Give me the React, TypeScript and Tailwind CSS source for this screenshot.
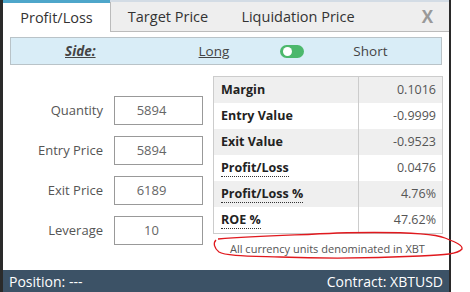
import React from 'react';

const inputs = [
  { label: 'Quantity', value: '5894' },
  { label: 'Entry Price', value: '5894' },
  { label: 'Exit Price', value: '6189' },
  { label: 'Leverage', value: '10' },
];

const results = [
  { label: 'Margin', value: '0.1016', dotted: false },
  { label: 'Entry Value', value: '-0.9999', dotted: false },
  { label: 'Exit Value', value: '-0.9523', dotted: false },
  { label: 'Profit/Loss', value: '0.0476', dotted: true },
  { label: 'Profit/Loss %', value: '4.76%', dotted: true },
  { label: 'ROE %', value: '47.62%', dotted: true },
];

export default function App() {
  return (
    <div className="relative w-[470px] h-[292px] bg-white font-['Open_Sans',sans-serif] overflow-hidden">
      <div className="w-[451px] h-[292px] flex flex-col border-l-[3px] border-r-2 border-[#2a2a2a]">
        {/* Tabs */}
        <div className="flex h-[32px] bg-[#eeeeee] border-t-2 border-[#d3dce5] text-[14.5px] text-[#333]">
          <div className="w-[107px] -mt-[2px] border-t-[3px] border-[#4ea6ca] bg-white flex items-center justify-center">
            Profit/Loss
          </div>
          <div className="w-[115px] border-l border-b border-[#bbbbbb] flex items-center justify-center">
            Target Price
          </div>
          <div className="w-[146px] border-b border-[#bbbbbb] flex items-center justify-center">
            Liquidation Price
          </div>
          <div className="flex-1 border-b border-[#bbbbbb] flex items-center justify-end pr-[16px] text-[17px] font-bold text-[#999]">
            X
          </div>
        </div>

        {/* Side */}
        <div className="mx-[7px] mt-[5px] h-[28px] bg-[#d9edf7] border border-[#b9c3c8] flex items-center text-[13.5px] text-[#444]">
          <span className="ml-[54px] font-bold italic underline">Side:</span>
          <span className="ml-[103px] underline">Long</span>
          <span className="ml-[51px] w-[24px] h-[13px] rounded-full bg-[#4cb86c] flex items-center pl-[3px]">
            <span className="w-[9px] h-[9px] rounded-full bg-white" />
          </span>
          <span className="ml-[49px]">Short</span>
        </div>

        {/* Content */}
        <div className="flex flex-1">
          <div className="w-[210px] pt-[31px] flex flex-col gap-[11px]">
            {inputs.map(i => (
              <div key={i.label} className="flex items-center h-[29px]">
                <span className="w-[100px] text-right text-[13px] text-[#555]">{i.label}</span>
                <span className="ml-[11px] w-[89px] h-[29px] border border-[#999] flex items-center justify-center pr-[14px] text-[13px] text-[#666]">
                  {i.value}
                </span>
              </div>
            ))}
          </div>
          <div className="w-[230px] pt-[11px] flex flex-col">
            <div className="border border-[#cccccc]">
              {results.map((r, idx) => (
                <div
                  key={r.label}
                  className={`flex h-[26px] items-center text-[12.5px] ${idx % 2 === 0 ? 'bg-[#efefef]' : 'bg-white'}`}
                >
                  <div className="w-[145px] h-full flex items-center pl-[7px] border-r border-[#cccccc] font-bold text-[#222]">
                    <span className={r.dotted ? 'border-b border-dotted border-[#333] leading-[16px]' : ''}>{r.label}</span>
                  </div>
                  <div className="flex-1 text-right pr-[6px] text-[#555]">{r.value}</div>
                </div>
              ))}
            </div>
            <div className="mt-[7px] pl-[17px] text-[11px] text-[#555]">All currency units denominated in XBT</div>
          </div>
        </div>

        {/* Footer */}
        <div className="h-[22px] bg-[#3c5266] flex items-center justify-between px-[6px] text-[14px] text-white">
          <span>Position: ---</span>
          <span>Contract: XBTUSD</span>
        </div>
      </div>

      <svg className="absolute left-0 top-0" width="470" height="292" viewBox="0 0 470 292" fill="none">
        <path
          d="M218 239 C 260 236, 300 235, 337 233 C 380 232, 430 232, 445 238 C 455 242, 463 245, 462 249 C 458 254, 445 255, 420 256 C 380 258, 330 259, 280 257 C 250 256, 225 256, 219 252 C 214 248, 213 243, 216 240"
          stroke="#e0191e"
          strokeWidth="1.3"
        />
      </svg>
    </div>
  );
}
